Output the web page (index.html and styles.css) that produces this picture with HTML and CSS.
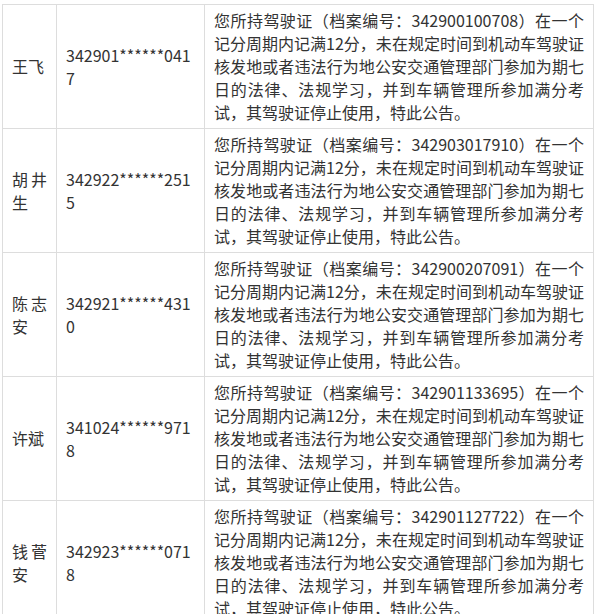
FILE: index.html
```html
<!DOCTYPE html>
<html lang="zh-CN">
<head>
<meta charset="utf-8">
<link rel="stylesheet" href="styles.css">
</head>
<body>
<table class="notice">
  <colgroup>
    <col class="c-name">
    <col class="c-id">
    <col class="c-text">
  </colgroup>
  <tbody>
    <tr>
      <td class="name">王飞</td>
      <td class="id">342901******0417</td>
      <td class="text">您所持驾驶证（档案编号：342900100708）在一个记分周期内记满12分，未在规定时间到机动车驾驶证核发地或者违法行为地公安交通管理部门参加为期七日的法律、法规学习，并到车辆管理所参加满分考试，其驾驶证停止使用，特此公告。</td>
    </tr>
    <tr>
      <td class="name">胡井生</td>
      <td class="id">342922******2515</td>
      <td class="text">您所持驾驶证（档案编号：342903017910）在一个记分周期内记满12分，未在规定时间到机动车驾驶证核发地或者违法行为地公安交通管理部门参加为期七日的法律、法规学习，并到车辆管理所参加满分考试，其驾驶证停止使用，特此公告。</td>
    </tr>
    <tr>
      <td class="name">陈志安</td>
      <td class="id">342921******4310</td>
      <td class="text">您所持驾驶证（档案编号：342900207091）在一个记分周期内记满12分，未在规定时间到机动车驾驶证核发地或者违法行为地公安交通管理部门参加为期七日的法律、法规学习，并到车辆管理所参加满分考试，其驾驶证停止使用，特此公告。</td>
    </tr>
    <tr>
      <td class="name">许斌</td>
      <td class="id">341024******9718</td>
      <td class="text">您所持驾驶证（档案编号：342901133695）在一个记分周期内记满12分，未在规定时间到机动车驾驶证核发地或者违法行为地公安交通管理部门参加为期七日的法律、法规学习，并到车辆管理所参加满分考试，其驾驶证停止使用，特此公告。</td>
    </tr>
    <tr>
      <td class="name">钱菅安</td>
      <td class="id">342923******0718</td>
      <td class="text">您所持驾驶证（档案编号：342901127722）在一个记分周期内记满12分，未在规定时间到机动车驾驶证核发地或者违法行为地公安交通管理部门参加为期七日的法律、法规学习，并到车辆管理所参加满分考试，其驾驶证停止使用，特此公告。</td>
    </tr>
  </tbody>
</table>
</body>
</html>
```

FILE: styles.css
```css
html, body {
  margin: 0;
  padding: 0;
  background: #ffffff;
}

body {
  padding: 4px 0 0 2px;
  font-family: "Noto Sans CJK SC", "Noto Sans", sans-serif;
  font-size: 16px;
  line-height: 23px;
  color: #333333;
}

.notice {
  border-collapse: collapse;
  table-layout: fixed;
  width: 591px;
}

.c-name { width: 54px; }
.c-id { width: 148px; }
.c-text { width: 389px; }

.notice td {
  border: 1px solid #dddddd;
  padding: 4px 9px;
  vertical-align: middle;
  text-align: justify;
  word-break: break-all;
}

.notice td.text {
  height: 115px;
}
```
